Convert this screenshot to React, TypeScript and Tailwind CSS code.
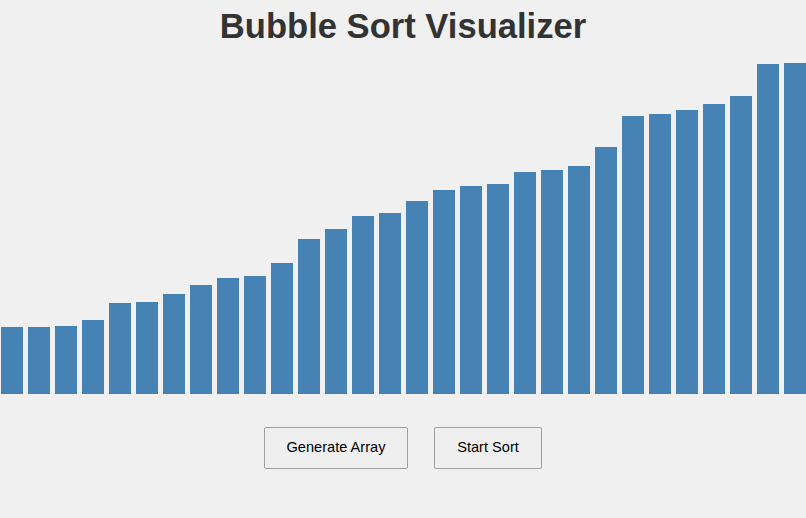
import * as React from "react"

// bar heights in px, read off the reference (already sorted)
const HEIGHTS = [
  67, 67, 68, 74, 91, 92, 100, 109, 116, 118,
  131, 155, 165, 178, 181, 193, 204, 208, 210, 222,
  224, 228, 247, 278, 280, 284, 290, 298, 330, 331,
]

export default function App() {
  return (
    <div className="flex h-[518px] w-full flex-col items-center overflow-hidden bg-[#f0f0f0] font-['Liberation_Sans',Arial,sans-serif]">
      <h1 className="pt-[7px] text-[34.6px] leading-[39px] font-bold text-[#333333]">
        Bubble Sort Visualizer
      </h1>

      <div className="mt-[8px] flex h-[340px] w-full items-end justify-center gap-[5px]">
        {HEIGHTS.map((h, i) => (
          <div key={i} className="w-[22px] shrink-0 bg-[#4682b4]" style={{ height: h }} />
        ))}
      </div>

      <div className="mt-[33px] flex gap-[26px]">
        <button className="h-[42px] w-[144px] rounded-[2px] border border-[#a0a0a0] bg-[#efefef] text-[14.6px] text-black">
          Generate Array
        </button>
        <button className="h-[42px] w-[108px] rounded-[2px] border border-[#a0a0a0] bg-[#efefef] text-[14.6px] text-black">
          Start Sort
        </button>
      </div>
    </div>
  )
}
